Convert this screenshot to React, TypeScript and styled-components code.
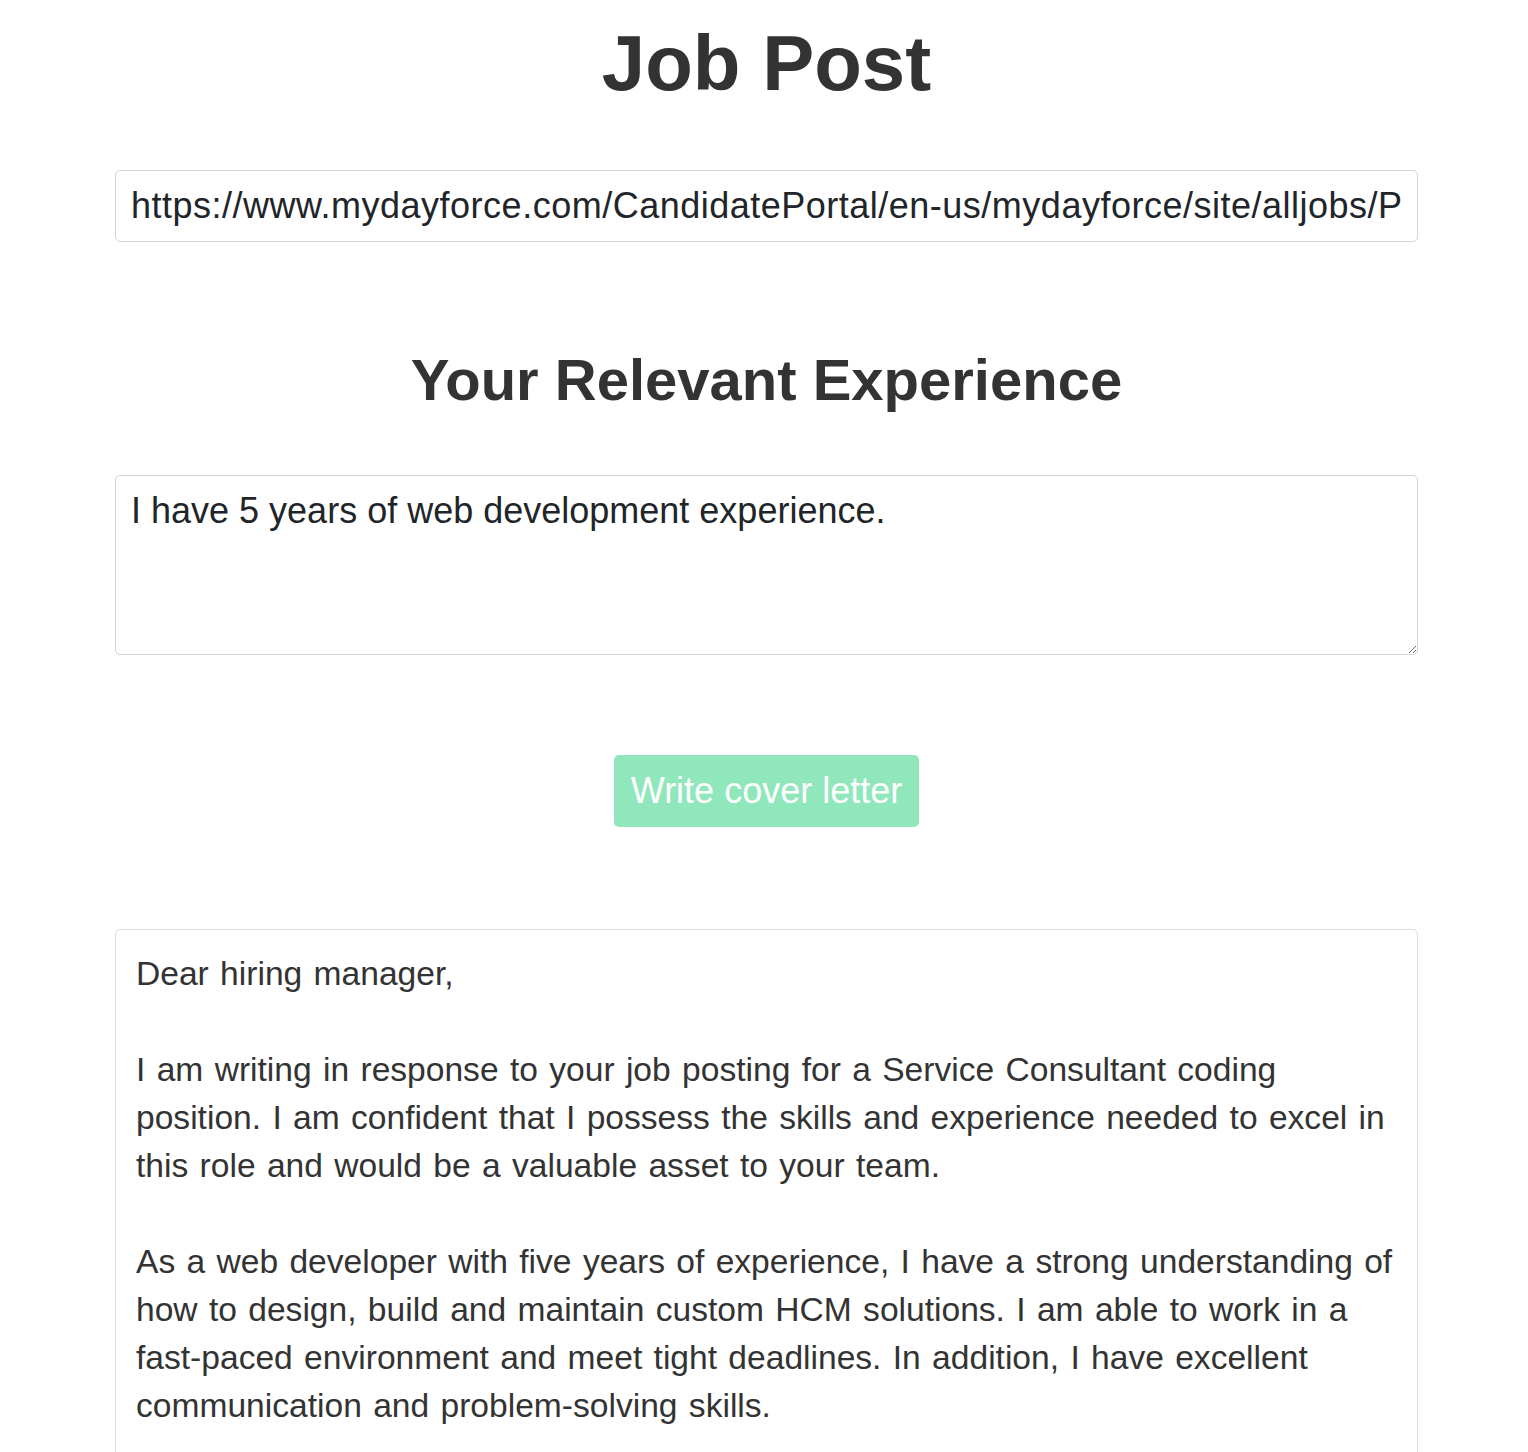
import React from "react";
import styled, { createGlobalStyle } from "styled-components";

const GlobalStyle = createGlobalStyle`
  body {
    margin: 0;
    background: #fff;
    font-family: "Liberation Sans", Arial, Helvetica, sans-serif;
    color: #333;
  }
`;

const letter = `Dear hiring manager,

I am writing in response to your job posting for a Service Consultant coding position. I am confident that I possess the skills and experience needed to excel in this role and would be a valuable asset to your team.

As a web developer with five years of experience, I have a strong understanding of how to design, build and maintain custom HCM solutions. I am able to work in a fast-paced environment and meet tight deadlines. In addition, I have excellent communication and problem-solving skills.

I am excited about the opportunity to join your team and contribute to your success. Thank you for your time and consideration.

Sincerely,
Your Name`;

export default function App() {
  return (
    <Page>
      <GlobalStyle />
      <Title>Job Post</Title>
      <UrlInput
        type="text"
        defaultValue="https://www.mydayforce.com/CandidatePortal/en-us/mydayforce/site/alljobs/Posting/View/12345"
      />
      <SubTitle>Your Relevant Experience</SubTitle>
      <ExperienceInput defaultValue="I have 5 years of web development experience." />
      <Actions>
        <WriteButton type="button">Write cover letter</WriteButton>
      </Actions>
      <Letter>{letter}</Letter>
    </Page>
  );
}

const Page = styled.main`
  display: flex;
  flex-direction: column;
  padding: 15px 110px 40px 115px;
`;

const Title = styled.h1`
  margin: 0 0 59px;
  font-size: 78px;
  line-height: 96px;
  font-weight: bold;
  text-align: center;
  color: #333;
`;

const fieldBase = `
  box-sizing: border-box;
  width: 100%;
  font-family: "Liberation Sans", Arial, Helvetica, sans-serif;
  font-size: 36px;
  line-height: 54px;
  color: #212529;
  background: #fff;
  border: 1px solid #ced4da;
  border-radius: 5px;
  padding: 8px 15px;
  outline: none;
`;

const UrlInput = styled.input`
  ${fieldBase}
  height: 72px;
  letter-spacing: 0.5px;
`;

const SubTitle = styled.h2`
  margin: 103px 0 60px;
  font-size: 58px;
  line-height: 70px;
  font-weight: bold;
  text-align: center;
  color: #333;
`;

const ExperienceInput = styled.textarea`
  ${fieldBase}
  display: block;
  height: 180px;
  resize: vertical;
`;

const Actions = styled.div`
  display: flex;
  justify-content: center;
  margin: 100px 0 102px;
`;

const WriteButton = styled.button`
  height: 72px;
  padding: 0 17px;
  font-family: "Liberation Sans", Arial, Helvetica, sans-serif;
  font-size: 36px;
  color: #fff;
  background: #90e7bc;
  border: none;
  border-radius: 5px;
  cursor: pointer;
`;

const Letter = styled.div`
  box-sizing: border-box;
  border: 1px solid #ddd;
  border-radius: 5px;
  padding: 20px 20px 20px 20px;
  font-size: 33.6px;
  line-height: 48px;
  word-spacing: 2px;
  color: #333;
  white-space: pre-wrap;
`;
